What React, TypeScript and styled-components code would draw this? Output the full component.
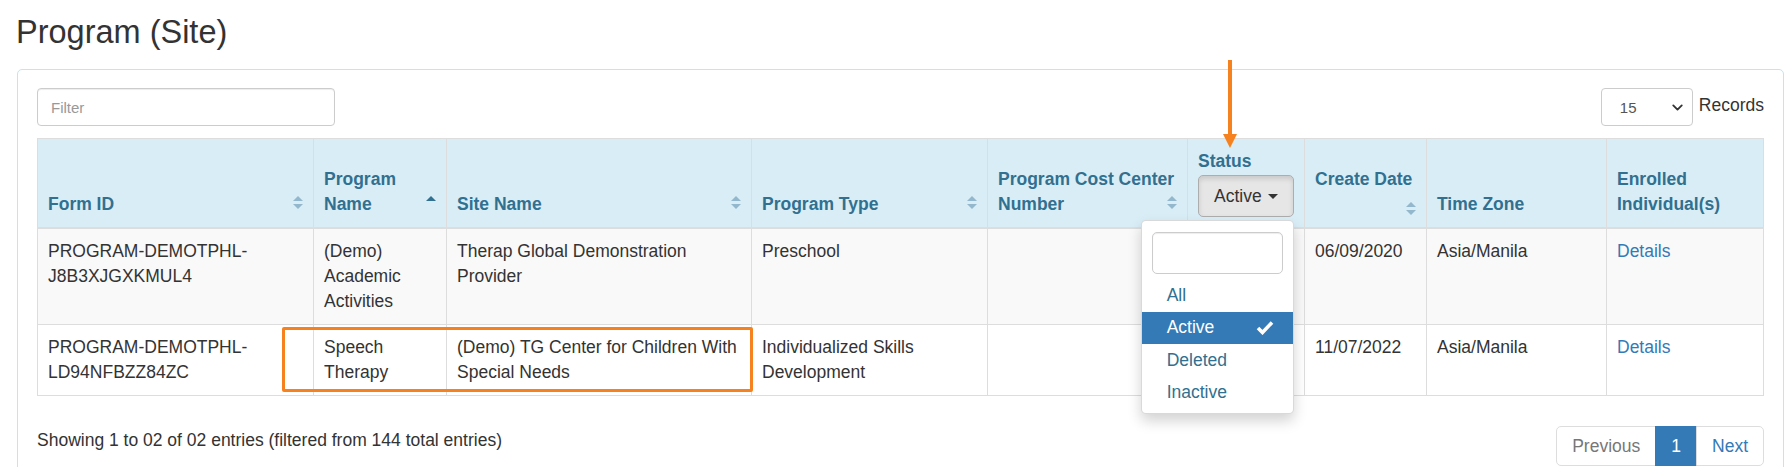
import React from "react";
import styled, { createGlobalStyle, css } from "styled-components";
import { ChevronDown } from "lucide-react";

const GlobalStyle = createGlobalStyle`
  html, body {
    margin: 0;
    padding: 0;
    background: #fff;
  }
  body {
    font-family: "Liberation Sans", Arial, Helvetica, sans-serif;
    font-size: 17.5px;
    line-height: 25px;
    color: #333;
  }
  * {
    box-sizing: border-box;
  }
`;

const columns = [
  { key: "formId", label: "Form ID", width: 276, sort: "both" },
  { key: "program", label: "Program Name", width: 133, sort: "asc" },
  { key: "site", label: "Site Name", width: 305, sort: "both" },
  { key: "type", label: "Program Type", width: 236, sort: "both" },
  { key: "cost", label: "Program Cost Center Number", width: 200, sort: "both" },
  { key: "status", label: "Status", width: 117, sort: "none" },
  { key: "created", label: "Create Date", width: 122, sort: "both" },
  { key: "tz", label: "Time Zone", width: 180, sort: "none" },
  { key: "enrolled", label: "Enrolled Individual(s)", width: 157, sort: "none" },
];

const rows = [
  {
    formId: "PROGRAM-DEMOTPHL-J8B3XJGXKMUL4",
    program: "(Demo) Academic Activities",
    site: "Therap Global Demonstration Provider",
    type: "Preschool",
    created: "06/09/2020",
    tz: "Asia/Manila",
  },
  {
    formId: "PROGRAM-DEMOTPHL-LD94NFBZZ84ZC",
    program: "Speech Therapy",
    site: "(Demo) TG Center for Children With Special Needs",
    type: "Individualized Skills Development",
    created: "11/07/2022",
    tz: "Asia/Manila",
  },
];

const statusOptions = ["All", "Active", "Deleted", "Inactive"];

const SortIcon = ({ state }: { state: string }) => (
  <svg width="10" height="15" viewBox="0 0 10 15">
    <polygon
      points="0,6 5,1 10,6"
      fill={state === "asc" ? "#31708f" : "#93b7cc"}
    />
    {state === "both" && <polygon points="0,9 5,14 10,9" fill="#93b7cc" />}
  </svg>
);

const CheckIcon = () => (
  <svg width="18" height="15" viewBox="0 0 18 15">
    <path
      d="M2 8 L6.5 12.5 L16 2.5"
      fill="none"
      stroke="#fff"
      strokeWidth="3.6"
      strokeLinejoin="miter"
    />
  </svg>
);

const App: React.FC = () => {
  return (
    <Page>
      <GlobalStyle />
      <Title>Program (Site)</Title>
      <Panel>
        <Toolbar>
          <FilterInput placeholder="Filter" />
          <RecordsBox>
            <SelectWrap>
              <Select defaultValue="15">
                <option value="15">15</option>
                <option value="25">25</option>
                <option value="50">50</option>
              </Select>
              <ChevronWrap>
                <ChevronDown size={17} strokeWidth={2.6} />
              </ChevronWrap>
            </SelectWrap>
            <RecordsLabel>Records</RecordsLabel>
          </RecordsBox>
        </Toolbar>

        <TableWrap>
          <Table>
            <colgroup>
              {columns.map((c) => (
                <Col key={c.key} $w={c.width} />
              ))}
            </colgroup>
            <thead>
              <tr>
                {columns.map((c) => {
                  if (c.key === "status") {
                    return (
                      <Th key={c.key}>
                        <StatusLabel>{c.label}</StatusLabel>
                        <DropdownWrap>
                          <StatusButton>
                            Active <Caret />
                          </StatusButton>
                          <Menu>
                            <MenuSearch />
                            <MenuList>
                              {statusOptions.map((o) => (
                                <MenuItem key={o} $active={o === "Active"}>
                                  {o}
                                  {o === "Active" && <CheckIcon />}
                                </MenuItem>
                              ))}
                            </MenuList>
                          </Menu>
                        </DropdownWrap>
                      </Th>
                    );
                  }
                  return (
                    <Th key={c.key}>
                      {c.label}
                      {c.key === "created" && <IconLine />}
                      {c.sort !== "none" && (
                        <SortSlot $low={c.key === "created"}>
                          <SortIcon state={c.sort} />
                        </SortSlot>
                      )}
                    </Th>
                  );
                })}
              </tr>
            </thead>
            <tbody>
              {rows.map((r, i) => (
                <Tr key={r.formId} $striped={i % 2 === 0}>
                  <Td>{r.formId}</Td>
                  <Td>{r.program}</Td>
                  <Td>{r.site}</Td>
                  <Td>{r.type}</Td>
                  <Td />
                  <Td />
                  <Td>{r.created}</Td>
                  <Td>{r.tz}</Td>
                  <Td>
                    <Link href="#">Details</Link>
                  </Td>
                </Tr>
              ))}
            </tbody>
          </Table>
          <Highlight />
        </TableWrap>

        <Footer>
          <Info>
            Showing 1 to 02 of 02 entries (filtered from 144 total entries)
          </Info>
          <Pagination>
            <PageLink $disabled $first>
              Previous
            </PageLink>
            <PageLink $active>1</PageLink>
            <PageLink $last>Next</PageLink>
          </Pagination>
        </Footer>
      </Panel>

      <Arrow width="14" height="89" viewBox="0 0 14 89">
        <line x1="7" y1="0" x2="7" y2="76" stroke="#f5821f" strokeWidth="4" />
        <polygon points="0,74 14,74 7,88" fill="#f5821f" />
      </Arrow>
    </Page>
  );
};

export default App;

const Page = styled.div`
  position: relative;
  padding: 14px 8px 0 17px;
`;

const Title = styled.h1`
  margin: 0 0 19px -1px;
  font-size: 32.5px;
  line-height: 36px;
  font-weight: 400;
  color: #333;
`;

const Panel = styled.div`
  border: 1px solid #bce8f1;
  border-radius: 5px;
  padding: 18px 19px 19px;
`;

const Toolbar = styled.div`
  display: flex;
  justify-content: space-between;
  align-items: flex-start;
  margin-bottom: 12px;
`;

const FilterInput = styled.input`
  width: 298px;
  height: 38px;
  padding: 0 13px;
  border: 1px solid #ccc;
  border-radius: 4px;
  box-shadow: inset 0 1px 1px rgba(0, 0, 0, 0.075);
  font-family: inherit;
  font-size: 15px;
  color: #555;
  outline: none;

  &::placeholder {
    color: #999;
  }
`;

const RecordsBox = styled.div`
  display: flex;
  align-items: flex-start;
  gap: 6px;
`;

const SelectWrap = styled.div`
  position: relative;
  width: 92px;
  height: 38px;
`;

const Select = styled.select`
  appearance: none;
  width: 100%;
  height: 100%;
  padding: 0 18px;
  border: 1px solid #ccc;
  border-radius: 4px;
  background: #fff;
  font-family: inherit;
  font-size: 15px;
  color: #555;
`;

const ChevronWrap = styled.span`
  position: absolute;
  right: 7px;
  top: 11px;
  display: flex;
  color: #333;
  pointer-events: none;
`;

const RecordsLabel = styled.span`
  margin-top: 5px;
  font-size: 17.5px;
  line-height: 25px;
  color: #333;
`;

const TableWrap = styled.div`
  position: relative;
`;

const Table = styled.table`
  width: 100%;
  table-layout: fixed;
  border-collapse: collapse;
  border: 1px solid #ddd;
`;

const Col = styled.col<{ $w: number }>`
  width: ${({ $w }) => $w}px;
`;

const Th = styled.th`
  position: relative;
  padding: 10px;
  border: 1px solid #ddd;
  border-bottom-width: 2px;
  background: #d9edf7;
  color: #31708f;
  font-weight: 700;
  text-align: left;
  vertical-align: bottom;
`;

const IconLine = styled.span`
  display: block;
  height: 25px;
`;

const SortSlot = styled.span<{ $low?: boolean }>`
  position: absolute;
  right: 10px;
  bottom: ${({ $low }) => ($low ? "11px" : "17px")};
  display: flex;
`;

const StatusLabel = styled.div`
  line-height: 25px;
`;

const DropdownWrap = styled.div`
  position: relative;
  display: inline-block;
  margin-top: 1px;
`;

const StatusButton = styled.button`
  display: inline-flex;
  align-items: center;
  height: 42px;
  padding: 7.5px 15px;
  border: 1px solid #adadad;
  border-radius: 5px;
  background: #e6e6e6;
  box-shadow: inset 0 3px 5px rgba(0, 0, 0, 0.125);
  font-family: inherit;
  font-size: 17.5px;
  line-height: 25px;
  font-weight: 400;
  color: #333;
`;

const Caret = styled.span`
  display: inline-block;
  width: 0;
  height: 0;
  margin-left: 6px;
  border-top: 5px solid #333;
  border-left: 5px solid transparent;
  border-right: 5px solid transparent;
`;

const Menu = styled.div`
  position: absolute;
  top: calc(100% + 3px);
  right: 0;
  z-index: 10;
  width: 153px;
  padding: 11px 0 4px;
  background: #fff;
  border: 1px solid rgba(0, 0, 0, 0.15);
  border-radius: 5px;
  box-shadow: 0 7px 14px rgba(0, 0, 0, 0.175);
  font-weight: 400;
`;

const MenuSearch = styled.input`
  display: block;
  width: 131px;
  height: 42px;
  margin: 0 0 5px 10px;
  border: 1px solid #ccc;
  border-radius: 5px;
  box-shadow: inset 0 1px 1px rgba(0, 0, 0, 0.075);
  outline: none;
`;

const MenuList = styled.div`
  display: flex;
  flex-direction: column;
`;

const MenuItem = styled.div<{ $active?: boolean }>`
  display: flex;
  align-items: center;
  justify-content: space-between;
  padding: 3.75px 19px 3.75px 25px;
  line-height: 25px;
  color: #31708f;

  ${({ $active }) =>
    $active &&
    css`
      background: #337ab7;
      color: #fff;
    `}
`;

const Tr = styled.tr<{ $striped?: boolean }>`
  background: ${({ $striped }) => ($striped ? "#f9f9f9" : "#fff")};
`;

const Td = styled.td`
  padding: 10px;
  border: 1px solid #ddd;
  vertical-align: top;
  color: #333;
`;

const Link = styled.a`
  color: #337ab7;
  text-decoration: none;
`;

const Highlight = styled.div`
  position: absolute;
  left: 245px;
  top: 189px;
  width: 471px;
  height: 65px;
  border: 3px solid #f5821f;
  border-radius: 2px;
  pointer-events: none;
`;

const Footer = styled.div`
  display: flex;
  justify-content: space-between;
  align-items: flex-start;
  margin-top: 30px;
`;

const Info = styled.div`
  padding-top: 2px;
  color: #333;
`;

const Pagination = styled.div`
  display: flex;
`;

const PageLink = styled.span<{
  $active?: boolean;
  $disabled?: boolean;
  $first?: boolean;
  $last?: boolean;
}>`
  padding: 7px 15px;
  margin-left: -1px;
  line-height: 24px;
  border: 1px solid #ddd;
  background: #fff;
  color: #337ab7;

  ${({ $disabled }) =>
    $disabled &&
    css`
      color: #777;
    `}
  ${({ $active }) =>
    $active &&
    css`
      background: #337ab7;
      border-color: #337ab7;
      color: #fff;
    `}
  ${({ $first }) =>
    $first &&
    css`
      border-radius: 5px 0 0 5px;
    `}
  ${({ $last }) =>
    $last &&
    css`
      border-radius: 0 5px 5px 0;
    `}
`;

const Arrow = styled.svg`
  position: absolute;
  left: 1223px;
  top: 60px;
  pointer-events: none;
`;
